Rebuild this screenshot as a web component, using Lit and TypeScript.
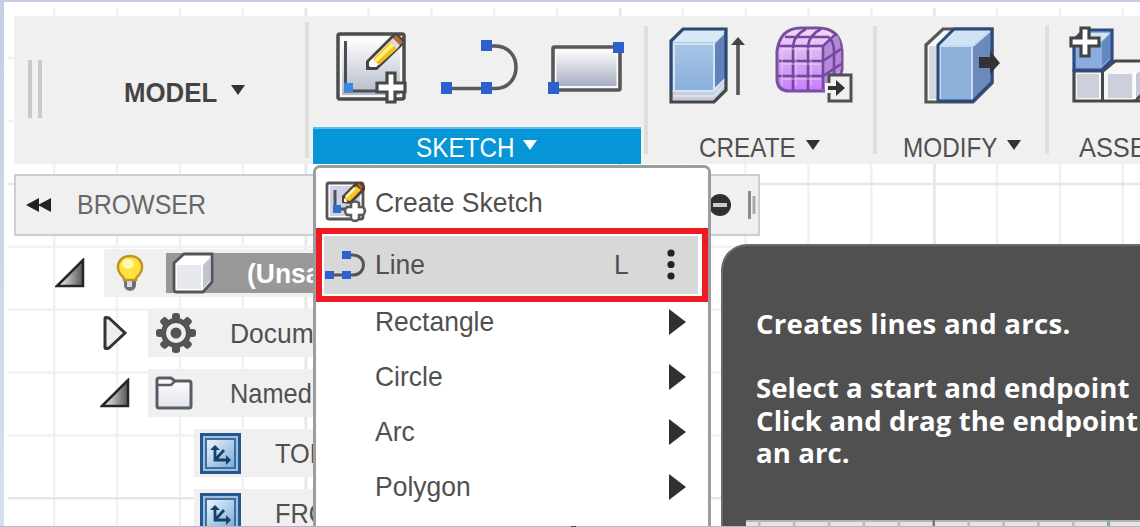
import { LitElement, html, svg, css } from "lit";
import { customElement } from "lit/decorators.js";

const caret = html`<svg class="caret" width="14" height="11" viewBox="0 0 14 11"><path d="M0 1H14L7 11Z" fill="currentColor"/></svg>`;

const sketchIcon = html`<svg width="74" height="74" viewBox="0 0 74 74">
  <defs><linearGradient id="sg" x1="0" y1="0" x2="0" y2="1"><stop offset="0" stop-color="#fff"/><stop offset="1" stop-color="#b4bac9"/></linearGradient></defs>
  <rect x="3" y="3" width="66" height="65" rx="2" fill="#f8f8fa" stroke="#4c4c4c" stroke-width="3.500"/>
  <rect x="7" y="7" width="58" height="57" fill="url(#sg)"/>
  <path d="M10.500 10V60H64" fill="none" stroke="#4a4e57" stroke-width="3"/>
  <rect x="9" y="52" width="9" height="9" fill="#3c87e0"/>
  <path d="M31 39V30L56 5Q60 1 64 4L68 8Q70 12 66 16L42 39Z" fill="#444"/>
  <path d="M34 35V31L55 10L62 17L41 36H35Z" fill="#fff"/>
  <path d="M38 28L55 11L62 18L44 34Z" fill="#f4bd20"/><path d="M39 29L56 12L59 15L42 31Z" fill="#fff078"/>
  <path d="M55 10L58 7L65 14L62 18Z" fill="#ddd"/><path d="M58 7L61 4L68 11L65 14Z" fill="#bd6a35"/>
  <path d="M52 42H60V52H70V61H60V71H52V61H42V52H52Z" fill="#fff" stroke="#484848" stroke-width="3.200"/></svg>`;

const sketchSmall = html`<svg width="42" height="42" viewBox="0 0 42 42">
  <rect x="2" y="2" width="36" height="36" rx="2" fill="#fff" stroke="#555" stroke-width="2.800"/><rect x="5" y="5" width="30" height="30" fill="#ccd3e2"/>
  <path d="M10 9V28H22" fill="none" stroke="#4d5564" stroke-width="3"/><rect x="8" y="24" width="8" height="8" fill="#2f6fc4"/>
  <path d="M17 22V15L31 1H36L40 5V9L26 23Z" fill="#4a4036"/><path d="M20 19V16L31 5L36 9L25 20Z" fill="#f7c42c"/><path d="M19 17L22 20V21H19Z" fill="#fff"/><path d="M20 15L29 6L31 8L22 17Z" fill="#fff2a0"/><path d="M32 4L34 2L38 6L36 8Z" fill="#c2592b"/>
  <path d="M26 22Q30 19 34 22V26H38Q42 30 38 34H34V38Q30 42 26 38V34H22Q18 30 22 26H26Z" fill="#fff" stroke="#5a5a5a" stroke-width="2.500"/></svg>`;

const lineIcon = html`<svg width="78" height="56" viewBox="0 0 78 56">
  <path d="M8 48.500H55C83 48.500 83 6 55 6H47" fill="none" stroke="#5a5a5a" stroke-width="3.600"/>
  <g fill="#2d60cf"><rect x="1" y="42" width="11" height="12"/><rect x="41" y="42" width="11" height="12"/><rect x="41" y="0" width="11" height="11"/></g></svg>`;

const lineSmall = html`<svg width="41" height="30" viewBox="0 0 41 30">
  <path d="M5 25H28C42 25 42 5 28 5H22" fill="none" stroke="#555" stroke-width="3"/>
  <g fill="#2d60cf"><rect x="0" y="21" width="9" height="8"/><rect x="17" y="21" width="9" height="8"/><rect x="17" y="1" width="9" height="8"/></g></svg>`;

const rectIcon = html`<svg width="76" height="54" viewBox="0 0 76 54">
  <defs><linearGradient id="rg" x1="0" y1="0" x2="0" y2="1"><stop offset="0" stop-color="#fdfdfd"/><stop offset="1" stop-color="#a6aec0"/></linearGradient></defs>
  <rect x="5" y="5" width="67" height="43" rx="1.500" fill="#fafafa" stroke="#585858" stroke-width="3.600"/><rect x="8.500" y="8" width="60" height="36" fill="url(#rg)"/>
  <rect x="65" y="0" width="11" height="11" fill="#2d60cf"/><rect x="0" y="40" width="11" height="12" fill="#2d60cf"/></svg>`;

const boxIcon = html`<svg width="78" height="80" viewBox="0 0 78 80">
  <defs><linearGradient id="bg" x1="0" y1="0" x2="0" y2="1"><stop offset="0" stop-color="#a9c5e4"/><stop offset="1" stop-color="#8aafde"/></linearGradient></defs>
  <path d="M3 15L15 3H58V56L45 77H3Z" fill="#eceef2"/><path d="M3 66H46L58 53V63L46 76H3Z" fill="#c9ccd6"/>
  <path d="M4 15L16 4H58L46 16H4Z" fill="#d9e8f7"/><path d="M4 16H46V64H4Z" fill="url(#bg)"/><path d="M46 16L58 4V52L46 64Z" fill="#6182b8"/>
  <path d="M6 64V18H45M46 64V17L56 7M5 65H45L57 53M5 70H46L57 58" fill="none" stroke="#d5e4f3" stroke-width="2"/>
  <path d="M3 66V15L15 3H58V54" fill="none" stroke="#2d4873" stroke-width="3.200"/><path d="M3 66V76H46L58 64V54" fill="none" stroke="#484848" stroke-width="3.200"/>
  <path d="M70 69V17" stroke="#555" stroke-width="3.600"/><path d="M63 19L70 11L77 19Z" fill="#444"/></svg>`;

const meshIcon = html`<svg width="78" height="78" viewBox="0 0 78 78">
  <defs><linearGradient id="mg" x1="0" y1="0" x2="0" y2="1"><stop offset="0" stop-color="#f2d9fb"/><stop offset=".5" stop-color="#d7aaee"/><stop offset="1" stop-color="#c77dff"/></linearGradient></defs>
  <path d="M2 25C4 10 12 2 26 2H43C58 2 66 10 67 25V44C66 52 58 60 50 65H14Q3 65 2 54Z" fill="url(#mg)" stroke="#77519d" stroke-width="3"/>
  <path d="M48 21L63 9Q67 20 66 43L48 62Z" fill="#b489da"/>
  <path d="M4 20H48V63M4 35H48L66 23M3 50H48L66 38M18 64V20Q19 9 31 3M33 64V20Q34 9 46 3M10 11H53Q58 13 59 24V54M48 20L61 8" fill="none" stroke="#76489b" stroke-width="2.600"/>
  <path d="M7 24V60M21 24V60M36 24V60M7 23H46M7 38H46M7 53H46" stroke="#f0ddff" opacity=".5" stroke-width="1.300"/>
  <rect x="54" y="49" width="22" height="26" fill="#f0f0f0" stroke="#505050" stroke-width="3"/>
  <rect x="50" y="57" width="6" height="10" fill="#f0f0f0"/><path d="M53 60H61V54L70 62L61 70V64H53Z" fill="#333"/></svg>`;

const modifyIcon = html`<svg width="78" height="80" viewBox="0 0 78 80">
  <path d="M3 19L20 3H69V57L50 76H3Z" fill="#fafafa" stroke="#555" stroke-width="3.200"/><path d="M6 20H14V73H6Z" fill="#d7d7df"/>
  <path d="M15 19L31 3H69V56L50 75H15Z" fill="#8eb1dc"/><path d="M16 19L32 4H68L51 20Z" fill="#d0e2f4"/><path d="M50 20L69 4V56L50 74Z" fill="#6b8abb"/>
  <path d="M17 73V20H49V74M50 20L67 5" fill="none" stroke="#c4ddf2" stroke-width="2"/>
  <path d="M15 19L31 3H69V56L50 75H15Z" fill="none" stroke="#2c4b7d" stroke-width="3"/>
  <path d="M56 31H67V25L77 37L67 48V42H56Z" fill="#333"/></svg>`;

const assembleIcon = html`<svg width="90" height="80" viewBox="0 0 90 80">
  <path d="M5 45H34L46 35H90V75H5Z" fill="#f7f7f8" stroke="#484848" stroke-width="3.200"/><path d="M8 48H30V72H8ZM39 48H63V72H39Z" fill="#ccd0da"/>
  <path d="M67 48L80 38V62L67 73Z" fill="#c3cad6"/>
  <path d="M33.500 45V75M66 75L80 62" stroke="#484848" stroke-width="3"/><path d="M66 46V73" stroke="#fff" stroke-width="2"/>
  <path d="M5 14L15 4H43V34L33 44H5Z" fill="#89aede" stroke="#2c4b83" stroke-width="3.200"/><path d="M15 7H41L32 16H10Z" fill="#d2e4f6"/><path d="M33 16L41 8V32L33 40Z" fill="#6288c0"/>
  <path d="M12 2H20V12H30V20H20V30H12V20H2V12H12Z" fill="#fff" stroke="#444" stroke-width="3.200"/></svg>`;

const openArrow = html`<svg width="30" height="30" viewBox="0 0 30 30"><defs><linearGradient id="og"><stop offset="0" stop-color="#fff"/><stop offset="1" stop-color="#555"/></linearGradient></defs><path d="M2 28L28 2V28Z" fill="url(#og)" stroke="#262626" stroke-width="2.500"/></svg>`;
const closedArrow = html`<svg width="26" height="36" viewBox="0 0 26 36"><path d="M3 3Q3 2 7 3L23 18L7 33Q3 34 3 33Z" fill="#eee" stroke="#333" stroke-width="3"/></svg>`;
const bulb = html`<svg width="28" height="38" viewBox="0 0 28 38"><path d="M8 24H20V31Q20 36 14 37Q8 36 8 31Z" fill="#66717e"/><path d="M11 24H16V33H11Z" fill="#d5dce2"/><path d="M8 26Q8 23 5 21C-2 12 4 2 14 2C24 2 30 12 23 21Q20 23 20 26Z" fill="#ffe23b" stroke="#c39128" stroke-width="2.500"/><ellipse cx="12" cy="10" rx="6" ry="5" fill="#fff9b0"/></svg>`;
const cube = html`<svg width="42" height="42" viewBox="0 0 42 42"><path d="M2 11L12 2H40V30L31 40H4Q2 40 2 37Z" fill="#fff" stroke="#50545b" stroke-width="2.800"/><path d="M5 13H29V37H5Z" fill="#e6e8ee"/><path d="M31 13L38 6V29L31 37Z" fill="#c1c4ce"/></svg>`;
const gear = html`<svg width="40" height="40" viewBox="-20 -20 40 40"><g fill="#545454">${[0, 45, 90, 135].map(a => svg`<rect x="-4" y="-20" width="8" height="40" rx="3" transform="rotate(${a})"/>`)}<circle r="15"/></g><circle r="10" fill="#f0f0f0"/><circle r="5.500" fill="#545454"/></svg>`;
const folder = html`<svg width="38" height="34" viewBox="0 0 38 34"><defs><linearGradient id="fg" x1="0" y1="0" x2="0" y2="1"><stop offset="0" stop-color="#fff"/><stop offset="1" stop-color="#e3e4ea"/></linearGradient></defs><path d="M2 4Q2 2 4 2H16L20 5H34Q36 5 36 7V30Q36 32 34 32H4Q2 32 2 30Z" fill="url(#fg)" stroke="#575d65" stroke-width="3"/><path d="M3 9H16L20 5" fill="none" stroke="#575d65" stroke-width="2.500"/></svg>`;
const plane = html`<svg width="41" height="41" viewBox="0 0 41 41"><defs><linearGradient id="pg" x1="0" y1="0" x2="1" y2="1"><stop offset="0" stop-color="#eef6fd"/><stop offset="1" stop-color="#78a9d8"/></linearGradient></defs><rect x="1.500" y="1.500" width="38" height="38" fill="#9dc0e0" stroke="#24588f" stroke-width="3"/><rect x="6" y="6" width="29" height="29" fill="url(#pg)" stroke="#3f6d9f" stroke-width="2"/><path d="M15 15V27H27M15 27L24 17" fill="none" stroke="#173f6b" stroke-width="2.800"/><path d="M10 17L15 12L20 17ZM26 22L31 27L26 32Z" fill="#173f6b"/></svg>`;
const submenuArrow = html`<svg width="18" height="26" viewBox="0 0 18 26"><path d="M1 0L18 13L1 26Z" fill="#303030"/></svg>`;

@customElement("app-root")
export class AppRoot extends LitElement {
  static styles = css`
    :host { display: block; position: relative; width: 1140px; height: 527px; overflow: hidden; background: #fff; font-family: "Liberation Sans", Arial, sans-serif; font-size: 27.3px; color: #505050; line-height: 30px; }
    * { box-sizing: border-box; } svg { display: block; flex: none; } span { display: block; white-space: nowrap; transform: scaleX(.97); transform-origin: left; }
    .grid, .frame { position: absolute; inset: 0; }
    .page { position: relative; padding: 16px 0 0 14px; height: 527px; }
    .toolbar { display: flex; width: 1126px; height: 148px; background: #f0f0f0; overflow: hidden; }
    .workspace { flex: none; width: 295px; display: flex; align-items: center; padding: 4px 0 0 14px; background: linear-gradient(#dedede,#dedede) right 6px / 4px 136px no-repeat; font-weight: bold; height: 148px; color: #444; }
    .grip { width: 14px; height: 58px; border: solid #c9c9c9; border-width: 0 4px; margin-top: -6px; }
    .model { margin-left: 82px; margin-top: 1px; transform: scaleX(.945); } .workspace .caret { margin: -5px 0 0 8px; }
    .group { height: 148px; flex: none; display: flex; flex-direction: column; }
    .group.sep { background: linear-gradient(#dedede,#dedede) right 10px / 4px 128px no-repeat; }
    .icons { height: 111px; display: flex; align-items: flex-start; }
    .label { display: flex; height: 37px; align-items: center; padding-top: 4px; }
    .label span { transform: scaleX(.89); }
    .caret { color: #333; }
    .sketch { width: 339px; padding-left: 4px; }
    .sketch .icons { padding: 15px 0 0 22px; } .sketch .label { width: 328px; background: #0696d7; border-top: 2px solid #5ebbe7; color: #fff; padding: 2px 0 0 103px; } .sketch .label .caret { color: #fff; margin-left: -4px; }
    .i2 { margin: 9px 0 0 31px; } .i3 { margin: 11px 0 0 30px; }
    .create { width: 229px; } .create .icons { padding: 10px 0 0 20px; gap: 29px; } .create .label { padding-left: 51px; }
    .create .caret { margin-left: -3px; }
    .modify { width: 172px; } .modify .icons { padding: 10px 0 0 46px; } .modify .label { padding-left: 26px; }
    .assemble { width: 120px; } .assemble .icons { padding: 10px 0 0 20px; } .assemble .label { padding-left: 30px; }
    .assemble .label span { transform: scaleX(.93); }
    .label .caret { margin: -6px 0 0 -2px; }
    .browser { margin-top: 10px; width: 746px; height: 62px; border: 2.5px solid #cecece; background: #f0f0f0; display: flex; align-items: center; padding-left: 9px; color: #686868; }
    .bt { margin-left: 24px; transform: scaleX(.915); } .min { margin-left: auto; margin-right: 17px; } .bars { margin-right: 2px; }
    .tree { padding-top: 13px; }
    .row { display: flex; height: 48px; margin-bottom: 12px; align-items: center; }
    .fill { height: 48px; background: #f0f0f0; display: flex; align-items: center; flex: none; width: 320px; }
    .fill span { margin-top: 2px; }
    .r1 { padding-left: 41px; } .r1 .fill { margin-left: 19px; padding-left: 12px; }
    .sel { margin-left: 22px; height: 40px; width: 220px; background: #989898; color: #fff; font-weight: bold; display: flex; align-items: center; padding-left: 6px; gap: 33px; }
    .r2 { padding-left: 88px; } .r2 .fill { margin-left: 20px; padding-left: 8px; gap: 34px; }
    .r3 { padding-left: 86px; } .r3 .fill { margin-left: 18px; padding-left: 7px; gap: 37px; }
    .r3 span { transform: scaleX(.93); }
    .r4 { padding-left: 180px; } .r4 .fill { padding-left: 6px; gap: 34px; } .r4 span { transform: scaleX(.93); }
    .menu { position: absolute; left: 313px; top: 165px; width: 398px; height: 370px; border: 3px solid #9d9d9d; border-radius: 7px; background: #fff; padding: 6px 10px 0 8px; }
    .item { display: flex; height: 55px; align-items: center; justify-content: space-between; padding: 0 12px 0 51px; }
    .create-sketch { height: 58px; padding-left: 1px; justify-content: flex-start; gap: 8px; }
    .create-sketch svg { margin-top: -3px; }
    .line { height: 61px; margin-top: 2px; margin-bottom: -1px; background: #d8d8d8; border-top: 2px solid #bdbdbd; padding: 0 23px 0 1px; justify-content: flex-start; }
    .line svg { margin-top: -2px; }
    .line .name { margin-left: 9px; margin-right: auto; } .line .key { margin-right: 38px; }
    .line span { margin-top: -2px; }
    .mark { position: absolute; left: 316px; top: 228px; width: 392px; height: 74px; border: 6px solid #ed1c24; box-shadow: inset 0 0 0 2px #fff; }
    .tip { position: absolute; left: 721px; top: 244px; width: 440px; height: 300px; border-radius: 26px 0 0 0; background: #505050; border: 2px solid #6c6c6c; border-bottom: 0; color: #fff; font: bold 27.6px/32.3px "Open Sans", sans-serif; letter-spacing: .25px; padding: 61px 0 0 33px; white-space: nowrap; }
    .tip p { margin: 0 0 32px; } .strip { position: absolute; left: 23px; top: 274px; }
    .tip .details { letter-spacing: .06px; }
  `;
  grid() {
    const c = "#f1f1f1";
    return html`<svg class="grid" width="1140" height="527">${Array.from({ length: 18 }, (_, i) => svg`<rect x=${53 + i * 62.85} y="8" width=${i % 5 === 4 ? 3 : 2.5} height="519" fill=${i % 5 === 4 ? "#e8e8e8" : c}/>`)}${Array.from({ length: 8 }, (_, i) => svg`<rect x="8" y=${57 + i * 62.85} width="1132" height="2.500" fill=${i % 5 === 2 ? "#e6e6e6" : c}/>`)}</svg>`;
  }
  render() {
    return html`${this.grid()}
    <div class="page">
      <div class="toolbar">
        <div class="workspace"><div class="grip"></div><span class="model">MODEL</span>${caret}</div>
        <div class="group sep sketch"><div class="icons">${sketchIcon}<div class="i2">${lineIcon}</div><div class="i3">${rectIcon}</div></div><div class="label"><span>SKETCH</span>${caret}</div></div>
        <div class="group sep create"><div class="icons">${boxIcon}${meshIcon}</div><div class="label"><span>CREATE</span>${caret}</div></div>
        <div class="group sep modify"><div class="icons">${modifyIcon}</div><div class="label"><span>MODIFY</span>${caret}</div></div>
        <div class="group assemble"><div class="icons">${assembleIcon}</div><div class="label"><span>ASSE</span></div></div>
      </div>
      <div class="browser"><svg width="28" height="16" viewBox="0 0 28 16"><path d="M1 8L14 1V15ZM13 8L26 1V15Z" fill="#222"/></svg><span class="bt">BROWSER</span>
        <svg class="min" width="22" height="22" viewBox="0 0 22 22"><circle cx="11" cy="11" r="11" fill="#303030"/><path d="M4 11H18" stroke="#ccc" stroke-width="4"/></svg>
        <svg class="bars" width="8" height="28" viewBox="0 0 8 28"><path d="M1.500 0V28" stroke="#8b8b8b" stroke-width="3"/><path d="M6 5V23" stroke="#aaa" stroke-width="3"/></svg></div>
      <div class="tree">
        <div class="row r1">${openArrow}<div class="fill">${bulb}<div class="sel">${cube}<span>(Unsaved)</span></div></div></div>
        <div class="row r2">${closedArrow}<div class="fill">${gear}<span>Document</span></div></div>
        <div class="row r3">${openArrow}<div class="fill">${folder}<span>Named Views</span></div></div>
        <div class="row r4"><div class="fill">${plane}<span>TOP</span></div></div>
        <div class="row r4"><div class="fill">${plane}<span>FRONT</span></div></div>
      </div>
    </div>
    <div class="menu">
      <div class="item create-sketch">${sketchSmall}<span>Create Sketch</span></div>
      <div class="item line">${lineSmall}<span class="name">Line</span><span class="key">L</span><svg width="8" height="32" viewBox="0 0 8 32"><g fill="#222"><circle cx="4" cy="4" r="3.600"/><circle cx="4" cy="15.500" r="3.600"/><circle cx="4" cy="27" r="3.600"/></g></svg></div>
      ${["Rectangle", "Circle", "Arc", "Polygon"].map(t => html`<div class="item"><span>${t}</span>${submenuArrow}</div>`)}
    </div>
    <div class="mark"></div>
    <div class="tip"><p>Creates lines and arcs.</p><p class="details">Select a start and endpoint<br>Click and drag the endpoint<br>an arc.</p>
      <svg class="strip" width="400" height="10"><rect width="400" height="10" fill="#e5e5e5"/><rect width="400" height="2" fill="#b4b4b4"/>${Array.from({ length: 10 }, (_, i) => svg`<rect x=${12 + i * 34.9} width="2.500" height="10" fill=${i === 5 ? "#777" : "#bbb"}/>`)}<rect x="361" width="3" height="10" fill="#83b583"/></svg></div>
    <svg class="frame" width="1140" height="527"><defs><linearGradient id="fr" x1="0" y1="0" x2="0" y2="1"><stop offset="0" stop-color="#c4cde2"/><stop offset="1" stop-color="#d5e0ee"/></linearGradient></defs><rect width="4" height="527" fill="url(#fr)"/><rect width="1140" height="2" fill="#c4cee3"/><rect y="526" width="1140" height="1" fill="#a9b9d5"/><rect x="571" y="526" width="5" height="1" fill="#444"/></svg>`;
  }
}
